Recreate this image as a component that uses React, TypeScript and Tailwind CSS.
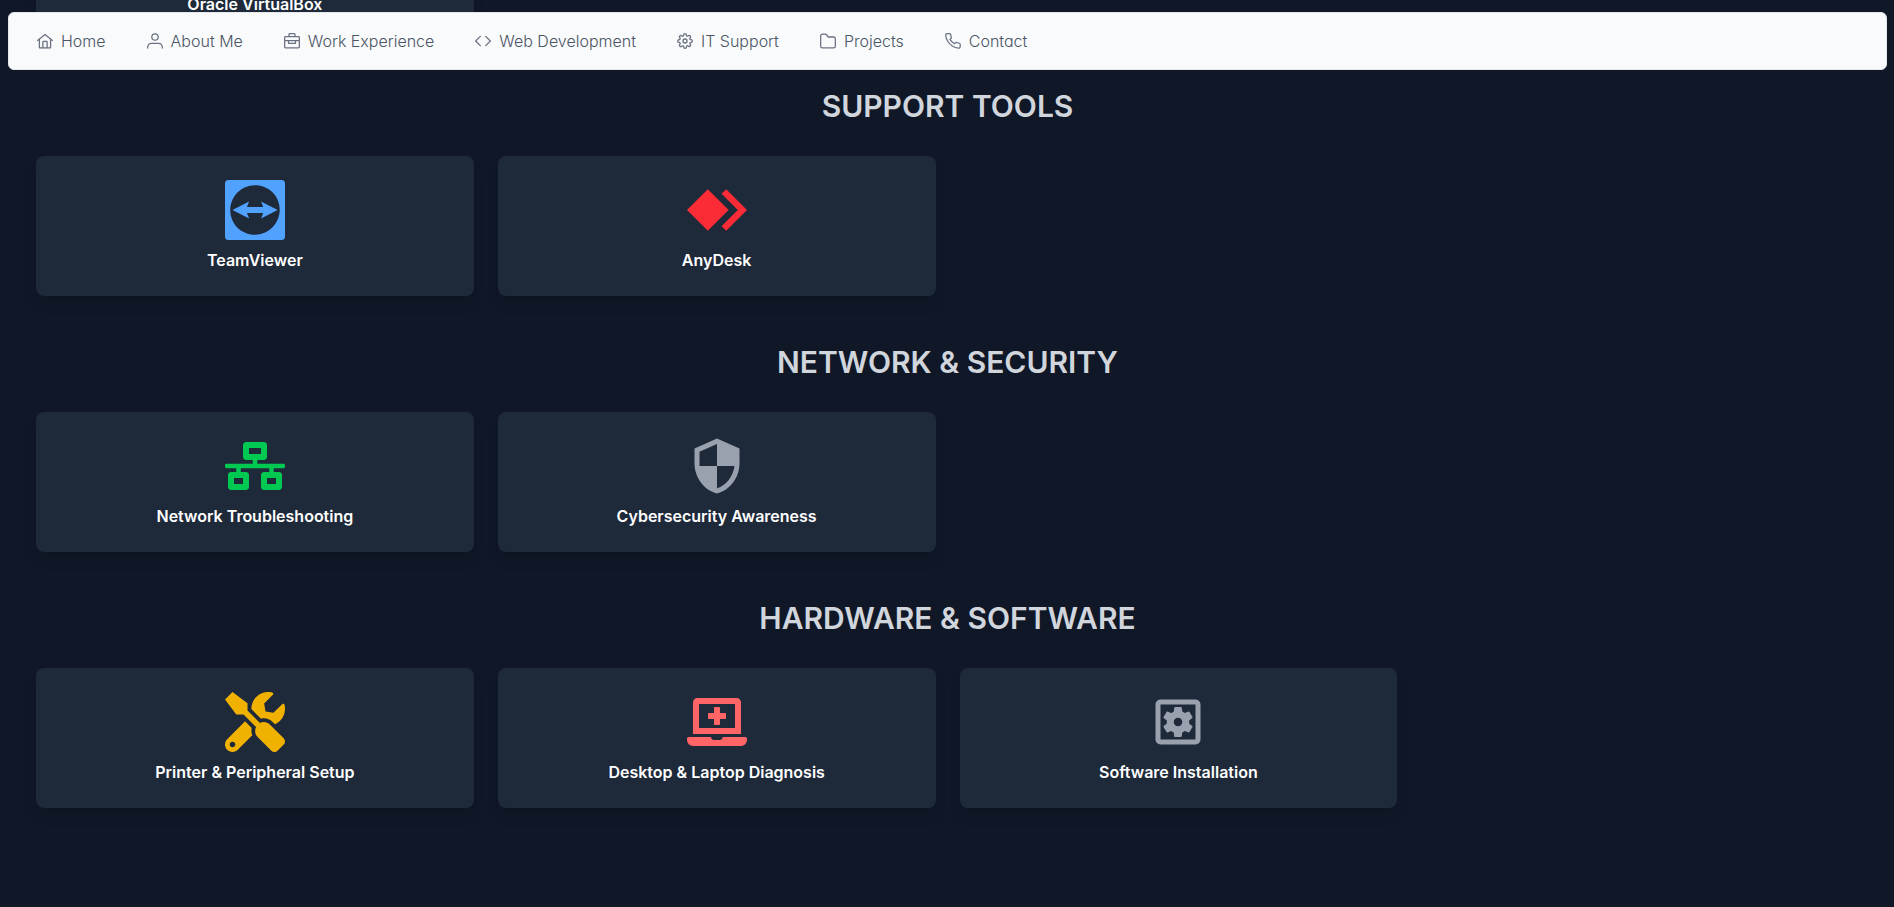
import type { ComponentType, ReactNode } from "react";
import { FiSettings } from "react-icons/fi";
import { SiAnydesk, SiTeamviewer, SiVirtualbox } from "react-icons/si";
import { FaLaptopMedical, FaNetworkWired, FaTools } from "react-icons/fa";
import { MdOutlineSettingsApplications, MdSecurity } from "react-icons/md";

function NavIcon({ children }: { children: ReactNode }) {
  return (
    <svg
      viewBox="0 0 24 24"
      className="size-4 shrink-0 text-gray-500"
      fill="none"
      stroke="currentColor"
      strokeWidth="1.9"
      strokeLinecap="round"
      strokeLinejoin="round"
      aria-hidden="true"
    >
      {children}
    </svg>
  );
}

const navItems = [
  {
    label: "Home",
    icon: (
      <NavIcon>
        <path d="M.9 11.2 12 2.2l11.1 9" />
        <path d="M3.6 9.2V22.200H20.400V9.200" />
        <path d="M8.800 22V13.500a1 1 0 0 1 1-1h4.400a1 1 0 0 1 1 1V22" />
      </NavIcon>
    ),
  },
  {
    label: "About Me",
    icon: (
      <NavIcon>
        <circle cx="12" cy="6" r="4.800" />
        <path d="M1 22.500v-1.500a5.500 5.500 0 0 1 5.500-5.500h11a5.500 5.500 0 0 1 5.500 5.500v1.500" />
      </NavIcon>
    ),
  },
  {
    label: "Work Experience",
    icon: (
      <NavIcon>
        <rect x="1" y="5.300" width="22" height="17" rx="1.200" />
        <path d="M7.500 5V2.300a1.200 1.200 0 0 1 1.200-1.200h6.600a1.200 1.200 0 0 1 1.200 1.200V5" />
        <path d="M1.200 11.300H22.800M6.800 11.500v3.900h10.400V11.500" />
      </NavIcon>
    ),
  },
  {
    label: "Web Development",
    icon: (
      <NavIcon>
        <path d="m8 5-7 7 7 7M16 5l7 7-7 7" />
      </NavIcon>
    ),
  },
  {
    label: "IT Support",
    icon: <FiSettings className="size-4 shrink-0 text-gray-500" aria-hidden="true" />,
  },
  {
    label: "Projects",
    icon: (
      <NavIcon>
        <path d="M3.500 22.200h17A2.500 2.500 0 0 0 23 19.700V8.500A2.500 2.500 0 0 0 20.500 6h-8L9.300 2.300a1.500 1.500 0 0 0-1.100-.5H3.500A2.500 2.500 0 0 0 1 4.300v15.400a2.500 2.500 0 0 0 2.500 2.500Z" />
      </NavIcon>
    ),
  },
  {
    label: "Contact",
    icon: (
      <NavIcon>
        <path d="M22.800 17.300v3.300a2.200 2.200 0 0 1-2.400 2.200 21.800 21.800 0 0 1-9.500-3.400 21.500 21.500 0 0 1-6.600-6.600A21.800 21.800 0 0 1 1 3.300 2.200 2.200 0 0 1 3.100.9h3.300a2.200 2.200 0 0 1 2.200 1.900c.1 1 .4 2.100.8 3.100a2.200 2.200 0 0 1-.5 2.300L7.500 9.600a17.600 17.600 0 0 0 6.600 6.600l1.400-1.400a2.200 2.200 0 0 1 2.300-.5c1 .4 2 .6 3.100.8a2.200 2.200 0 0 1 1.900 2.200Z" />
      </NavIcon>
    ),
  },
];

type Skill = {
  name: string;
  Icon: ComponentType<{ className?: string }>;
  color: string;
};

const virtualization: Skill[] = [
  { name: "Oracle VirtualBox", Icon: SiVirtualbox, color: "text-blue-500" },
];

const supportTools: Skill[] = [
  { name: "TeamViewer", Icon: SiTeamviewer, color: "text-blue-400" },
  { name: "AnyDesk", Icon: SiAnydesk, color: "text-red-500" },
];

const network: Skill[] = [
  { name: "Network Troubleshooting", Icon: FaNetworkWired, color: "text-green-500" },
  { name: "Cybersecurity Awareness", Icon: MdSecurity, color: "text-gray-400" },
];

const hardware: Skill[] = [
  { name: "Printer & Peripheral Setup", Icon: FaTools, color: "text-yellow-500" },
  { name: "Desktop & Laptop Diagnosis", Icon: FaLaptopMedical, color: "text-red-400" },
  { name: "Software Installation", Icon: MdOutlineSettingsApplications, color: "text-gray-400" },
];

function SkillGrid({ skills }: { skills: Skill[] }) {
  return (
    <div className="mb-12 grid grid-cols-4 gap-6">
      {skills.map(({ name, Icon, color }) => (
        <div
          key={name}
          className="flex flex-col items-center rounded-lg bg-gray-800 p-6 shadow-lg"
        >
          <Icon className={`mb-2 size-15 ${color}`} />
          <h3 className="text-base font-semibold text-white">{name}</h3>
        </div>
      ))}
    </div>
  );
}

function SkillSection({ title, skills }: { title: string; skills: Skill[] }) {
  return (
    <section>
      <h2 className="mb-8 text-center text-3xl font-semibold text-gray-300">{title}</h2>
      <SkillGrid skills={skills} />
    </section>
  );
}

export default function App() {
  return (
    <div className="h-screen overflow-hidden bg-gray-900 font-['Inter',sans-serif]">
      <nav className="fixed top-3 right-[7px] left-2 z-10 rounded-md border border-gray-200 bg-gray-50 p-2">
        <ul className="flex gap-px font-light [font-feature-settings:'cv02','cv03','cv04','cv11']">
          {navItems.map(({ label, icon }) => (
            <li key={label}>
              <a
                href="#"
                className="flex items-center gap-2 px-5 py-3 text-base leading-4 text-gray-600"
              >
                {icon}
                {label}
              </a>
            </li>
          ))}
        </ul>
      </nav>
      <main className="-mt-25 pr-[35px] pl-9">
        <SkillGrid skills={virtualization} />
        <SkillSection title="SUPPORT TOOLS" skills={supportTools} />
        <SkillSection title="NETWORK & SECURITY" skills={network} />
        <SkillSection title="HARDWARE & SOFTWARE" skills={hardware} />
      </main>
    </div>
  );
}
